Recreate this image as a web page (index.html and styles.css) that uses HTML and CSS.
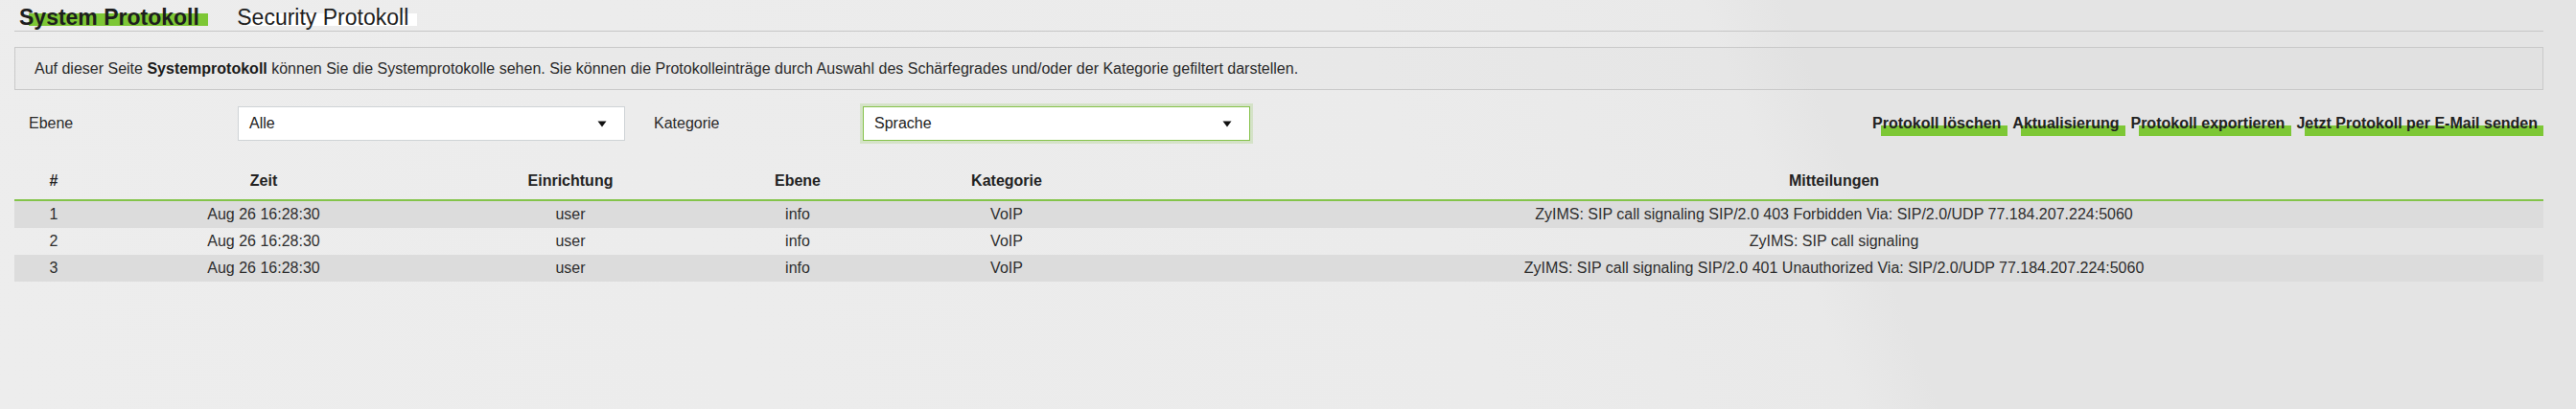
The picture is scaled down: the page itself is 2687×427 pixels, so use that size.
FILE: index.html
```html
<!DOCTYPE html>
<html lang="de">
<head>
<meta charset="utf-8">
<title>System Protokoll</title>
<link rel="stylesheet" href="styles.css">
</head>
<body>
<div class="page">
  <nav class="tabs">
    <span class="tab tab-active">System Protokoll</span>
    <span class="tab tab-inactive">Security Protokoll</span>
  </nav>

  <div class="info">Auf dieser Seite <b>Systemprotokoll</b> können Sie die Systemprotokolle sehen. Sie können die Protokolleinträge durch Auswahl des Schärfegrades und/oder der Kategorie gefiltert darstellen.</div>

  <div class="filters">
    <div class="filter-group">
      <span class="filter-label">Ebene</span>
      <div class="select">
        <span>Alle</span>
        <svg class="arrow" width="10" height="7" viewBox="0 0 10 7"><path d="M0.5 0.5H9.5L5 6.5Z" fill="#111"/></svg>
      </div>
    </div>
    <div class="filter-group">
      <span class="filter-label">Kategorie</span>
      <div class="select select-focus">
        <span>Sprache</span>
        <svg class="arrow" width="10" height="7" viewBox="0 0 10 7"><path d="M0.5 0.5H9.5L5 6.5Z" fill="#111"/></svg>
      </div>
    </div>
    <div class="actions">
      <span class="btn">Protokoll löschen</span>
      <span class="btn">Aktualisierung</span>
      <span class="btn">Protokoll exportieren</span>
      <span class="btn btn-last">Jetzt Protokoll per E-Mail senden</span>
    </div>
  </div>

  <table class="log">
    <colgroup>
      <col class="c-num"><col class="c-time"><col class="c-fac"><col class="c-lvl"><col class="c-cat"><col class="c-msg">
    </colgroup>
    <thead>
      <tr><th>#</th><th>Zeit</th><th>Einrichtung</th><th>Ebene</th><th>Kategorie</th><th>Mitteilungen</th></tr>
    </thead>
    <tbody>
      <tr><td>1</td><td>Aug 26 16:28:30</td><td>user</td><td>info</td><td>VoIP</td><td>ZyIMS: SIP call signaling SIP/2.0 403 Forbidden Via: SIP/2.0/UDP 77.184.207.224:5060</td></tr>
      <tr><td>2</td><td>Aug 26 16:28:30</td><td>user</td><td>info</td><td>VoIP</td><td>ZyIMS: SIP call signaling</td></tr>
      <tr><td>3</td><td>Aug 26 16:28:30</td><td>user</td><td>info</td><td>VoIP</td><td>ZyIMS: SIP call signaling SIP/2.0 401 Unauthorized Via: SIP/2.0/UDP 77.184.207.224:5060</td></tr>
    </tbody>
  </table>
</div>
</body>
</html>
```

FILE: styles.css
```css
html, body {
  margin: 0;
  padding: 0;
}
body {
  min-height: 427px;
  font-family: "Liberation Sans", Arial, sans-serif;
  color: #333;
  background: linear-gradient(69deg, #ededed 0%, #ebebeb 55%, #e9e9e9 68%, #e4e4e4 71%, #e4e4e4 100%);
}
.page {
  padding: 0 34px 0 15px;
}

/* Tabs */
.tabs {
  padding-top: 4px;
  height: 28px;
  line-height: 28px;
  font-size: 23px;
  border-bottom: 1px solid #c6c6c6;
  white-space: nowrap;
}
.tab {
  position: relative;
  z-index: 0;
  display: inline-block;
  padding-right: 9px;
  color: #1e1e1e;
}
.tab::before {
  content: "";
  position: absolute;
  z-index: -1;
  left: 10px;
  right: 0;
  top: 10px;
  height: 13px;
}
.tab-active {
  margin-left: 5px;
  font-weight: bold;
}
.tab-active::before {
  background: #7dc735;
}
.tab-inactive {
  margin-left: 24px;
}
.tab-inactive::before {
  background: #ffffff;
}

/* Info box */
.info {
  margin-top: 16px;
  padding: 13px 20px;
  border: 1px solid #c9c9c9;
  background: rgba(0, 0, 0, 0.012);
  font-size: 16px;
  line-height: 17px;
  color: #2a2a2a;
  white-space: nowrap;
}
.info b {
  color: #1a1a1a;
}

/* Filters */
.filters {
  display: flex;
  align-items: center;
  margin-top: 17px;
  height: 36px;
}
.filter-group {
  display: flex;
  align-items: center;
}
.filter-group + .filter-group {
  margin-left: 15px;
}
.filter-label {
  box-sizing: border-box;
  width: 233px;
  padding-left: 15px;
  font-size: 16px;
  color: #2a2a2a;
}
.select {
  position: relative;
  box-sizing: border-box;
  width: 404px;
  height: 36px;
  display: flex;
  align-items: center;
  justify-content: space-between;
  padding: 0 18px 0 11px;
  background: #ffffff;
  border: 1px solid #cfd3d6;
  font-size: 16px;
  color: #222;
}
.select-focus {
  border-color: #86c24a;
  box-shadow: 0 0 0 3px rgba(134, 194, 74, 0.22);
}
.arrow {
  display: block;
}

/* Action buttons */
.actions {
  margin-left: auto;
  display: flex;
  align-items: center;
  white-space: nowrap;
}
.btn {
  position: relative;
  z-index: 0;
  display: inline-block;
  margin-left: 5px;
  padding-right: 7px;
  font-size: 16px;
  line-height: 20px;
  font-weight: bold;
  color: #222;
}
.btn::before {
  content: "";
  position: absolute;
  z-index: -1;
  left: 9px;
  right: 0;
  top: 12px;
  height: 11px;
  background: #7dc735;
}
.btn-last {
  padding-right: 6px;
}

/* Log table */
.log {
  width: 100%;
  margin-top: 22px;
  border-collapse: separate;
  border-spacing: 0;
  table-layout: fixed;
  font-size: 16px;
}
.c-num { width: 82px; }
.c-time { width: 356px; }
.c-fac { width: 284px; }
.c-lvl { width: 190px; }
.c-cat { width: 246px; }
.c-msg { width: auto; }
.log th {
  padding: 0;
  line-height: 39px;
  font-weight: bold;
  color: #222;
  text-align: center;
  border-bottom: 2px solid #84c44a;
  white-space: nowrap;
}
.log td {
  padding: 0;
  line-height: 28px;
  text-align: center;
  color: #2e2e2e;
  white-space: nowrap;
}
.log tbody tr:nth-child(odd) td {
  background: #dcdcdc;
}
```
